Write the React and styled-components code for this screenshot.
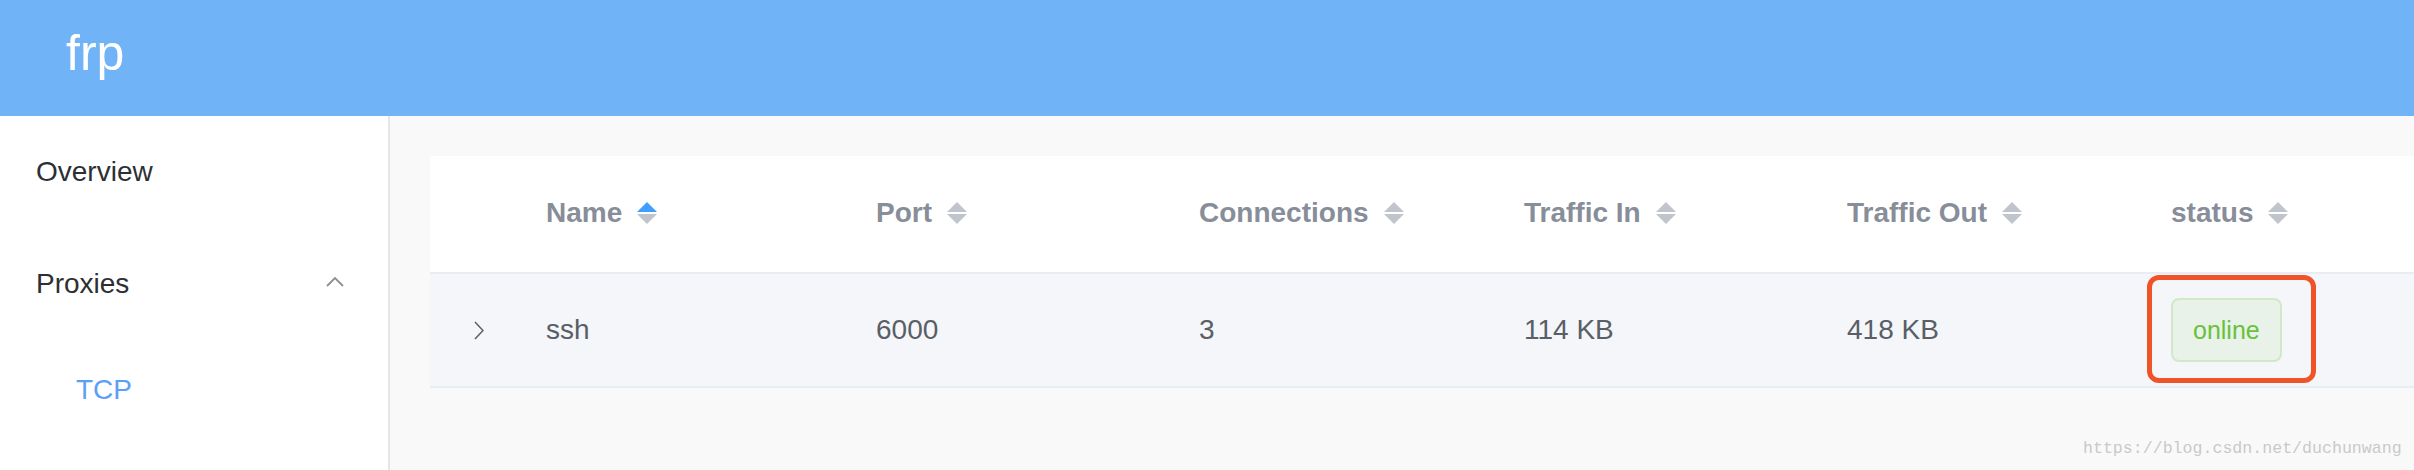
import React from "react";
import styled, { createGlobalStyle } from "styled-components";

const GlobalStyle = createGlobalStyle`
  body {
    margin: 0;
    font-family: "Liberation Sans", Arial, sans-serif;
    background: #f9f9f9;
  }
`;

const columns = [
  { key: "name", title: "Name", active: true },
  { key: "port", title: "Port" },
  { key: "conns", title: "Connections" },
  { key: "trafficIn", title: "Traffic In" },
  { key: "trafficOut", title: "Traffic Out" },
  { key: "status", title: "status" }
];

const proxies = [
  { name: "ssh", port: 6000, conns: 3, trafficIn: "114 KB", trafficOut: "418 KB", status: "online" }
];

const App = () => (
  <Page>
    <GlobalStyle />
    <Header>
      <Brand>frp</Brand>
    </Header>
    <Body>
      <Sidebar>
        <MenuItem>Overview</MenuItem>
        <MenuItem>
          Proxies
          <Arrow width="18" height="10" viewBox="0 0 18 10">
            <polyline points="1,9 9,1 17,9" fill="none" stroke="#8f8f8f" strokeWidth="1.8" />
          </Arrow>
        </MenuItem>
        <SubItem active>TCP</SubItem>
      </Sidebar>
      <Main>
        <Card>
          <Row head>
            <Cell />
            {columns.map(col => (
              <HeadCell key={col.key}>
                {col.title}
                <SortCaret active={col.active} />
              </HeadCell>
            ))}
          </Row>
          {proxies.map(p => (
            <Row key={p.name} shaded>
              <ExpandCell>
                <svg width="10" height="19" viewBox="0 0 10 19">
                  <polyline points="1,1 9,9.5 1,18" fill="none" stroke="#606266" strokeWidth="1.6" />
                </svg>
              </ExpandCell>
              <Cell>{p.name}</Cell>
              <Cell>{p.port}</Cell>
              <Cell>{p.conns}</Cell>
              <Cell>{p.trafficIn}</Cell>
              <Cell>{p.trafficOut}</Cell>
              <Cell>
                <TagWrap>
                  <Tag>{p.status}</Tag>
                  <Highlight />
                </TagWrap>
              </Cell>
            </Row>
          ))}
        </Card>
      </Main>
    </Body>
    <Watermark>https://blog.csdn.net/duchunwang</Watermark>
  </Page>
);

const SortCaret = ({ active }) => (
  <Caret width="20" height="22" viewBox="0 0 20 22">
    <polygon points="0,10 10,0 20,10" fill={active ? "#409eff" : "#c0c4cc"} />
    <polygon points="0,12 20,12 10,22" fill="#c0c4cc" />
  </Caret>
);

export default App;

const Page = styled.div`
  position: relative;
  width: 2414px;
  height: 470px;
  overflow: hidden;
`;

const Header = styled.header`
  height: 116px;
  background: #70b4f7;
  padding-left: 66px;
  box-sizing: border-box;
`;

const Brand = styled.div`
  padding-top: 28px;
  font-size: 50px;
  line-height: 50px;
  color: #fff;
`;

const Body = styled.div`
  display: flex;
  height: 354px;
`;

const Sidebar = styled.nav`
  width: 388px;
  flex-shrink: 0;
  background: #fff;
  border-right: 2px solid #e6e6e6;
`;

const MenuItem = styled.div`
  display: flex;
  align-items: center;
  justify-content: space-between;
  height: 112px;
  padding: 0 44px 0 36px;
  font-size: 28px;
  color: #2d2f33;
`;

const Arrow = styled.svg`
  margin-top: -4px;
`;

const SubItem = styled.div`
  height: 100px;
  line-height: 100px;
  padding-left: 76px;
  font-size: 28px;
  color: ${p => (p.active ? "#5b9ff8" : "#2d2f33")};
`;

const Main = styled.main`
  flex: 1;
  padding: 40px 0 0 40px;
  background: #f9f9f9;
`;

const Card = styled.div`
  background: #fff;
`;

const Row = styled.div`
  display: grid;
  grid-template-columns: 96px 330px 323px 325px 323px 324px 1fr;
  height: ${p => (p.head ? "116px" : "112px")};
  border-bottom: 2px solid #e8ecf3;
  background: ${p => (p.shaded ? "#f4f6fa" : "#fff")};
`;

const Cell = styled.div`
  display: flex;
  align-items: center;
  padding-left: 20px;
  font-size: 28px;
  color: #5a5e66;
`;

const HeadCell = styled(Cell)`
  font-weight: bold;
  color: #878d99;
  padding-bottom: 2px;
`;

const ExpandCell = styled(Cell)`
  justify-content: center;
  padding: 0 0 0 2px;
`;

const Caret = styled.svg`
  margin-left: 15px;
`;

const TagWrap = styled.span`
  position: relative;
  display: inline-flex;
`;

const Tag = styled.span`
  display: inline-flex;
  align-items: center;
  height: 64px;
  padding: 0 20px;
  box-sizing: border-box;
  border: 2px solid #d0e9c6;
  border-radius: 8px;
  background: #e8f2e8;
  color: #67c23a;
  font-size: 25px;
`;

const Highlight = styled.span`
  position: absolute;
  left: -24px;
  top: -23px;
  width: 169px;
  height: 108px;
  box-sizing: border-box;
  border: 5px solid #ee5428;
  border-radius: 12px;
`;

const Watermark = styled.div`
  position: absolute;
  left: 2083px;
  top: 439px;
  font-family: "Liberation Mono", "Courier New", monospace;
  font-size: 16.6px;
  line-height: 20px;
  color: #c9c9c9;
  white-space: nowrap;
`;
